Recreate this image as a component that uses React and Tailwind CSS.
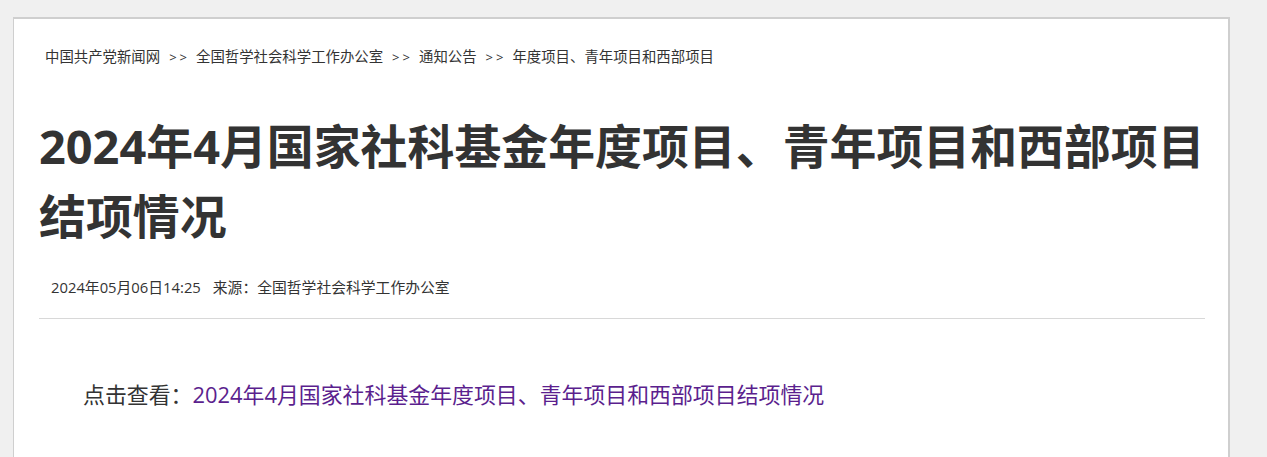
const FONT = "font-['Open_Sans','Noto_Sans_CJK_SC',sans-serif]";

/* ── Breadcrumb ──────────────────────────────────── */
function Breadcrumb({ items }) {
  return (
    <div className="flex items-center pl-[6px] text-[14.4px] leading-[20px] text-[#333]">
      {items.map((item, i) => (
        <span key={i} className="flex items-center">
          {i > 0 && <span className="pl-[9px] pr-[6px] text-[13px] tracking-[3px]">&gt;&gt;</span>}
          <span>{item}</span>
        </span>
      ))}
    </div>
  );
}

export default function App() {
  return (
    <div className={`min-h-[457px] bg-[#f0f0f0] pt-[17px] pl-[13px] ${FONT}`}>
      <div className="w-[1217px] h-[440px] bg-white border-l border-t-2 border-r-2 border-[#cfcfcf]">
        <div className="pl-[25px] pr-[23px] pt-[28px]">
          <Breadcrumb
            items={[
              "中国共产党新闻网",
              "全国哲学社会科学工作办公室",
              "通知公告",
              "年度项目、青年项目和西部项目",
            ]}
          />
          <h1 className="mt-[44px] -mr-[20px] text-[46.9px] leading-[70px] font-bold text-[#333]">
            2024年4月国家社科基金年度项目、青年项目和西部项目结项情况
          </h1>
          <div className="mt-[26px] pl-[12px] text-[14.8px] leading-[20px] text-[#333]">
            <span>2024年05月06日14:25</span>
            <span className="ml-[12px]">来源：全国哲学社会科学工作办公室</span>
          </div>
          <div className="mt-[21px] h-px bg-[#d8d8d8]" />
          <p className="mt-[61px] pl-[44px] text-[21.9px] leading-[30px] text-[#333]">
            点击查看：
            <a className="text-[#5b1f8e]" href="#">
              2024年4月国家社科基金年度项目、青年项目和西部项目结项情况
            </a>
          </p>
        </div>
      </div>
    </div>
  );
}
